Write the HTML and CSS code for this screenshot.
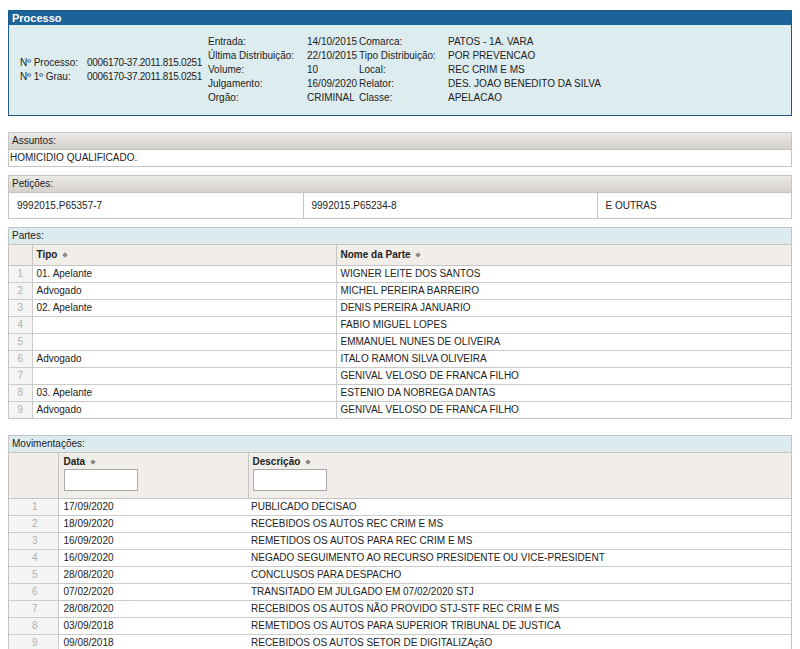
FILE: index.html
```html
<!DOCTYPE html>
<html lang="pt-BR">
<head>
  <meta charset="UTF-8">
  <title>Processo</title>
  <link rel="stylesheet" href="styles.css">
</head>
<body>
  <!-- Dados do processo -->
  <div class="processo">
    <div class="processo-title">Processo</div>
    <div class="processo-body">
      <div class="info-left">
        <span>Nº Processo:</span><span class="num-proc">0006170-37.2011.815.0251</span>
        <span>Nº 1º Grau:</span><span class="num-proc">0006170-37.2011.815.0251</span>
      </div>
      <div class="info-right">
        <span>Entrada:</span><span>14/10/2015</span><span>Comarca:</span><span>PATOS - 1A. VARA</span>
        <span>Última Distribuição:</span><span>22/10/2015</span><span>Tipo Distribuição:</span><span>POR PREVENCAO</span>
        <span>Volume:</span><span>10</span><span>Local:</span><span>REC CRIM E MS</span>
        <span>Julgamento:</span><span>16/09/2020</span><span>Relator:</span><span>DES. JOAO BENEDITO DA SILVA</span>
        <span>Orgão:</span><span>CRIMINAL</span><span>Classe:</span><span>APELACAO</span>
      </div>
    </div>
  </div>

  <!-- Assuntos -->
  <div class="box">
    <div class="box-title">Assuntos:</div>
    <div class="box-line">HOMICIDIO QUALIFICADO.</div>
  </div>

  <!-- Petições -->
  <div class="box">
    <div class="box-title">Petições:</div>
    <table class="peticoes">
      <tr>
        <td class="col-a">9992015.P65357-7</td>
        <td class="col-b">9992015.P65234-8</td>
        <td>E OUTRAS</td>
      </tr>
    </table>
  </div>

  <!-- Partes -->
  <div class="box partes">
    <div class="box-title blue">Partes:</div>
    <table class="grid-table">
      <thead>
        <tr>
          <th class="num"></th>
          <th class="tipo">Tipo <i class="sort"></i></th>
          <th>Nome da Parte <i class="sort"></i></th>
        </tr>
      </thead>
      <tbody>
        <tr><td class="num">1</td><td>01. Apelante</td><td>WIGNER LEITE DOS SANTOS</td></tr>
        <tr><td class="num">2</td><td>Advogado</td><td>MICHEL PEREIRA BARREIRO</td></tr>
        <tr><td class="num">3</td><td>02. Apelante</td><td>DENIS PEREIRA JANUARIO</td></tr>
        <tr><td class="num">4</td><td></td><td>FABIO MIGUEL LOPES</td></tr>
        <tr><td class="num">5</td><td></td><td>EMMANUEL NUNES DE OLIVEIRA</td></tr>
        <tr><td class="num">6</td><td>Advogado</td><td>ITALO RAMON SILVA OLIVEIRA</td></tr>
        <tr><td class="num">7</td><td></td><td>GENIVAL VELOSO DE FRANCA FILHO</td></tr>
        <tr><td class="num">8</td><td>03. Apelante</td><td>ESTENIO DA NOBREGA DANTAS</td></tr>
        <tr><td class="num">9</td><td>Advogado</td><td>GENIVAL VELOSO DE FRANCA FILHO</td></tr>
      </tbody>
    </table>
  </div>

  <!-- Movimentações -->
  <div class="box movs">
    <div class="box-title blue">Movimentações:</div>
    <table class="grid-table">
      <thead>
        <tr>
          <th class="num"></th>
          <th class="data">Data <i class="sort"></i><input type="text"></th>
          <th>Descrição <i class="sort"></i><input type="text"></th>
        </tr>
      </thead>
      <tbody>
        <tr><td class="num">1</td><td class="data">17/09/2020</td><td>PUBLICADO DECISAO</td></tr>
        <tr><td class="num">2</td><td class="data">18/09/2020</td><td>RECEBIDOS OS AUTOS REC CRIM E MS</td></tr>
        <tr><td class="num">3</td><td class="data">16/09/2020</td><td>REMETIDOS OS AUTOS PARA REC CRIM E MS</td></tr>
        <tr><td class="num">4</td><td class="data">16/09/2020</td><td>NEGADO SEGUIMENTO AO RECURSO PRESIDENTE OU VICE-PRESIDENT</td></tr>
        <tr><td class="num">5</td><td class="data">28/08/2020</td><td>CONCLUSOS PARA DESPACHO</td></tr>
        <tr><td class="num">6</td><td class="data">07/02/2020</td><td>TRANSITADO EM JULGADO EM 07/02/2020 STJ</td></tr>
        <tr><td class="num">7</td><td class="data">28/08/2020</td><td>RECEBIDOS OS AUTOS NÃO PROVIDO STJ-STF REC CRIM E MS</td></tr>
        <tr><td class="num">8</td><td class="data">03/09/2018</td><td>REMETIDOS OS AUTOS PARA SUPERIOR TRIBUNAL DE JUSTICA</td></tr>
        <tr><td class="num">9</td><td class="data">09/08/2018</td><td>RECEBIDOS OS AUTOS SETOR DE DIGITALIZAçãO</td></tr>
      </tbody>
    </table>
  </div>
</body>
</html>
```

FILE: styles.css
```css
* { box-sizing: border-box; }

body {
  margin: 10px 8px;
  font-family: "Liberation Sans", Arial, sans-serif;
  font-size: 10px;
  color: #222;
  background: #fff;
}

/* bloco do processo */
.processo {
  border: 1px solid #1d5b8c;
  background: #ddecef;
  margin-bottom: 16px;
}

.processo-title {
  height: 14px;
  line-height: 14px;
  padding-left: 3px;
  background: #1d6298;
  color: #fff;
  font-weight: bold;
  font-size: 11px;
}

.processo-body {
  display: flex;
  align-items: center;
  padding: 10px 0 10px 11px;
}

.info-left {
  display: grid;
  grid-template-columns: 67px 116px;
  line-height: 14px;
  margin-right: 5px;
}

.info-left .num-proc { letter-spacing: -0.3px; }

.info-right {
  display: grid;
  grid-template-columns: 99px 52px 89px auto;
  line-height: 14px;
}

.info-left span, .info-right span { white-space: nowrap; }

/* caixas comuns */
.box {
  border: 1px solid #c4c4c4;
  margin-bottom: 8px;
}

.box-title {
  height: 17px;
  line-height: 16px;
  padding-left: 3px;
  background: linear-gradient(#ebe9e6, #d5d1cc);
  border-bottom: 1px solid #c4c4c4;
}

.box-title.blue { background: #dcebee; }

.box-line {
  height: 16px;
  line-height: 16px;
  padding-left: 1px;
}

/* petições */
.peticoes {
  width: 100%;
  border-collapse: collapse;
}

.peticoes td {
  height: 25px;
  padding: 0 8px;
}

.peticoes .col-a, .peticoes .col-b {
  width: 294px;
  border-right: 1px solid #c4c4c4;
}

/* tabelas de grade */
.partes { margin-bottom: 16px; }

.grid-table {
  width: 100%;
  border-collapse: collapse;
}

.grid-table th {
  height: 20px;
  text-align: left;
  font-weight: bold;
  background: #f1ede9;
  padding: 0 4px;
  border-bottom: 1px solid #c4c4c4;
  border-left: 1px solid #c4c4c4;
}

.grid-table td {
  height: 17px;
  padding: 0 4px;
  border-bottom: 1px solid #cbcbcb;
  border-left: 1px solid #cbcbcb;
  white-space: nowrap;
}

.grid-table tbody tr:last-child td { border-bottom: 0; }

.grid-table .num {
  width: 23px;
  padding: 0;
  text-align: center;
  color: #b0b0b0;
  background: #f4f4f4;
  border-left: 0;
}

.grid-table th.num { background: #f1ede9; }

.grid-table .tipo { width: 304px; }

.sort {
  display: inline-block;
  width: 4px;
  height: 4px;
  margin: 0 0 1px 3px;
  background: #8a8a8a;
  border-radius: 1px;
  transform: rotate(45deg);
}

/* movimentações */
.movs .num { width: 49px; }

.movs .grid-table th {
  height: 45px;
  vertical-align: top;
  padding: 3px 3px 0 4px;
  line-height: 12px;
}

.movs .grid-table th.data { padding-left: 5px; }

.movs .grid-table td { padding-left: 3px; }

.movs .grid-table td.data {
  width: 190px;
  padding-left: 5px;
}

.movs .grid-table td:last-child { border-left: 0; }

.movs input {
  display: block;
  width: 74px;
  height: 22px;
  margin-top: 1px;
  border: 1px solid #a9a9a9;
  background: #fff;
}
```
